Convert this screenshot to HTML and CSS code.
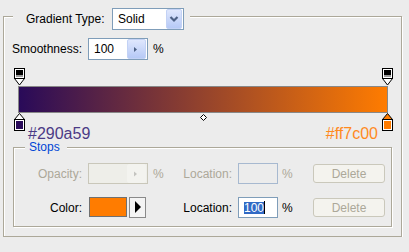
FILE: index.html
```html
<!DOCTYPE html>
<html lang="en">
<head>
    <meta charset="UTF-8">
    <meta name="viewport" content="width=device-width, initial-scale=1.0">
    <title>Gradient Editor</title>
    <link rel="stylesheet" href="styles.css">
</head>
<body>
    <fieldset class="group outer">
        <legend class="type-legend">
            <div class="type-row">
                <span class="type-label">Gradient Type:</span>
                <div class="select">
                    <span>Solid</span>
                    <span class="xp-btn select-btn">
                        <svg width="14" height="18" viewBox="0 0 14 18"><path d="M3.5 7 L7 10.5 L10.5 7" fill="none" stroke="#4d6185" stroke-width="2.2"/></svg>
                    </span>
                </div>
            </div>
        </legend>

        <div class="smooth-row">
            <span class="smooth-label">Smoothness:</span>
            <div class="spin">
                <span>100</span>
                <span class="xp-btn spin-btn">
                    <svg width="17" height="19" viewBox="0 0 17 19"><path d="M6 7 L9 9.5 L6 12 Z" fill="#4d6185"/></svg>
                </span>
            </div>
            <span class="pct">%</span>
        </div>

        <div class="editor">
            <div class="track">
                <svg class="marker" style="left: 0%" width="11" height="18" viewBox="0 0 11 18">
                    <polygon points="0.5,10.5 10.5,10.5 5.5,17" fill="#fff" stroke="#000"/>
                    <rect x="0.5" y="0.5" width="10" height="10" fill="#fff" stroke="#000"/>
                    <rect x="2" y="2" width="7" height="5" fill="#000"/>
                    <rect x="2" y="7" width="7" height="2" fill="#9c9c9c"/>
                </svg>
                <svg class="marker" style="left: 100%" width="11" height="18" viewBox="0 0 11 18">
                    <polygon points="0.5,10.5 10.5,10.5 5.5,17" fill="#fff" stroke="#000"/>
                    <rect x="0.5" y="0.5" width="10" height="10" fill="#fff" stroke="#000"/>
                    <rect x="2" y="2" width="7" height="5" fill="#000"/>
                    <rect x="2" y="7" width="7" height="2" fill="#9c9c9c"/>
                </svg>
            </div>
            <div class="bar"></div>
            <div class="track bottom">
                <svg class="marker" style="left: 0%" width="11" height="18" viewBox="0 0 11 18">
                    <polygon points="5.5,0.5 10.5,6.5 0.5,6.5" fill="#fff" stroke="#000"/>
                    <rect x="0.5" y="6.5" width="10" height="11" fill="#fff" stroke="#000"/>
                    <rect x="2" y="8" width="7" height="8" fill="#290a59"/>
                </svg>
                <svg class="midpoint" style="left: 50%" width="7" height="7" viewBox="0 0 7 7">
                    <polygon points="3.5,0.5 6.5,3.5 3.5,6.5 0.5,3.5" fill="#fff" stroke="#000"/>
                </svg>
                <svg class="marker" style="left: 100%" width="11" height="18" viewBox="0 0 11 18">
                    <polygon points="5.5,0.5 10.5,6.5 0.5,6.5" fill="#ff7c00" stroke="#000"/>
                    <rect x="0.5" y="6.5" width="10" height="11" fill="#fff" stroke="#000"/>
                    <rect x="2" y="8" width="7" height="8" fill="#ff7c00"/>
                </svg>
            </div>
            <div class="hex-row">
                <span class="hex-start">#290a59</span>
                <span class="hex-end">#ff7c00</span>
            </div>
        </div>

        <fieldset class="group stops-box">
            <legend>Stops</legend>
            <div class="stop-row disabled">
                <span class="cell-label">Opacity:</span>
                <div class="spin off">
                    <span></span>
                    <span class="xp-btn spin-btn">
                        <svg width="17" height="18" viewBox="0 0 17 18"><path d="M6 6.5 L9 9 L6 11.5 Z" fill="#c4c4c0"/></svg>
                    </span>
                </div>
                <span class="pct">%</span>
                <span class="cell-label">Location:</span>
                <div class="loc off"></div>
                <span class="pct small">%</span>
                <button class="del" disabled>Delete</button>
            </div>
            <div class="stop-row">
                <span class="cell-label">Color:</span>
                <div class="color-cell">
                    <span class="swatch"></span>
                    <span class="pick">
                        <svg width="15" height="19" viewBox="0 0 15 19"><path d="M5 3 L11 9 L5 15 Z" fill="#000"/></svg>
                    </span>
                </div>
                <span class="pct"></span>
                <span class="cell-label">Location:</span>
                <div class="loc"><span class="sel">100</span><span class="caret"></span></div>
                <span class="pct small">%</span>
                <button class="del" disabled>Delete</button>
            </div>
        </fieldset>
    </fieldset>
</body>
</html>
```

FILE: styles.css
```css
body {
    margin: 0;
    background: #ececec;
    font-family: "Liberation Sans", Arial, sans-serif;
    font-size: 12px;
    color: #000;
}

.group {
    border: 1px solid #aca899;
    box-shadow: 1px 1px 0 #fff, inset 1px 1px 0 #fff;
    margin: 0;
    min-width: 0;
    box-sizing: border-box;
}
.group legend {
    background: #ececec;
}

.outer {
    width: 399px;
    margin: 8px 0 0 3px;
    padding: 13px 8px 9px 8px;
}
.type-legend {
    height: 17px;
    margin-left: 1px;
    padding: 0 6px 0 13px;
}
.type-row {
    display: flex;
    gap: 6px;
}
.type-label {
    width: 80px;
    line-height: 22px;
}

.select {
    width: 72px;
    height: 22px;
    box-sizing: border-box;
    border: 1px solid #7f9db9;
    background: #fff;
    display: flex;
    align-items: center;
    justify-content: space-between;
    padding: 0 1px 0 5px;
}
.xp-btn {
    display: flex;
    background: linear-gradient(#dfe7fd, #b6c9f6);
    border-radius: 2px;
}
.select-btn {
    width: 16px;
    height: 20px;
    box-sizing: border-box;
    border: 1px solid #c3d2f5;
}

.smooth-row {
    display: flex;
    align-items: center;
    height: 22px;
}
.smooth-label {
    width: 76px;
}
.spin {
    width: 60px;
    height: 22px;
    box-sizing: border-box;
    border: 1px solid #7f9db9;
    background: #fff;
    display: flex;
    align-items: center;
    justify-content: space-between;
    padding: 0 1px 0 5px;
}
.spin-btn {
    width: 19px;
    height: 20px;
    box-sizing: border-box;
    border: 1px solid #c3d2f5;
}
.pct {
    width: 11px;
    margin-left: 5px;
}

.editor {
    margin: 8px 5px 0 6px;
}
.track {
    position: relative;
    height: 18px;
    margin: 0 1px;
}
.track.bottom {
    height: 14px;
}
.marker {
    position: absolute;
    top: 0;
    margin-left: -5px;
    display: block;
}
.midpoint {
    position: absolute;
    top: 1px;
    margin-left: -3px;
    display: block;
}
.bar {
    height: 27px;
    box-sizing: border-box;
    border: 1px solid #888;
    background: linear-gradient(to right, #290a59, #ff7c00);
}
.hex-row {
    display: flex;
    justify-content: space-between;
    padding: 0 10px;
    font-size: 16px;
    line-height: 13px;
}
.hex-start {
    color: #4b3b86;
}
.hex-end {
    color: #ff8a1e;
}

.stops-box {
    width: 379px;
    margin-left: 1px;
    padding: 9px 0 8px 0;
}
.stops-box legend {
    margin-left: 11px;
    padding: 0 7px 0 4px;
    color: #0046d5;
    line-height: 14px;
}
.stop-row {
    display: flex;
    align-items: center;
    height: 21px;
}
.stop-row + .stop-row {
    margin-top: 13px;
}
.cell-label {
    width: 68px;
    margin-right: 6px;
    text-align: right;
}
.disabled .cell-label,
.disabled .pct {
    color: #aca899;
}
.pct.small {
    margin-left: 4px;
}

.spin.off {
    height: 21px;
    border-color: #c9c7ba;
    background: #eeeee9;
}
.spin.off .spin-btn {
    height: 19px;
    background: #f3f3ef;
    border-color: #f3f3ef;
}

.loc {
    width: 40px;
    height: 21px;
    box-sizing: border-box;
    border: 1px solid #7f9db9;
    background: #fff;
    display: flex;
    align-items: center;
    padding-left: 5px;
}
.loc.off {
    border-color: #a7b9d0;
    background: transparent;
}
.sel {
    background: #316ac5;
    color: #fff;
    line-height: 12px;
}
.caret {
    width: 1px;
    height: 13px;
    background: #000;
}

.color-cell {
    width: 60px;
    display: flex;
    gap: 2px;
}
.swatch {
    width: 38px;
    height: 20px;
    margin-left: 1px;
    box-sizing: border-box;
    border: 1px solid #707070;
    background: #ff7c00;
}
.pick {
    width: 17px;
    height: 21px;
    box-sizing: border-box;
    border: 1px solid #8a8a8a;
    background: #f4f4f4;
    display: flex;
}

.del {
    width: 72px;
    height: 19px;
    margin-left: 20px;
    padding: 0;
    border: 1px solid #cac8bb;
    border-radius: 3px;
    background: #f4f3ee;
    color: #aca899;
    font-family: inherit;
    font-size: 12px;
}
```
